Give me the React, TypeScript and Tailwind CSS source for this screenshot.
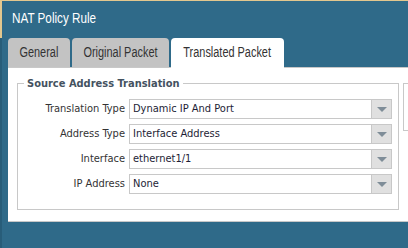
import React from "react";

const narrow = { fontFamily: "'Liberation Sans', Arial, sans-serif" };
const tahoma = { fontFamily: "'DejaVu Sans Condensed', 'DejaVu Sans', sans-serif" };

function Select({ value }: { value: string }) {
  return (
    <div className="flex h-[20px] items-stretch border border-[#c8c8c8] bg-white">
      <div className="flex flex-1 items-center pl-[3px] text-[11px] text-[#1d1d35]" style={tahoma}>
        {value}
      </div>
      <div className="flex w-[20px] items-center justify-center border-l border-[#c8c8c8] bg-[#e0e0e0]">
        <svg width="10" height="5" viewBox="0 0 10 5">
          <path d="M0 0 L10 0 L5 5 Z" fill="#7f8d98" />
        </svg>
      </div>
    </div>
  );
}

const rows = [
  ["Translation Type", "Dynamic IP And Port"],
  ["Address Type", "Interface Address"],
  ["Interface", "ethernet1/1"],
  ["IP Address", "None"],
];

function Tab({ label, w, active }: { label: string; w: string; active?: boolean }) {
  return (
    <div
      className={
        active
          ? `relative z-10 flex h-[30px] ${w} items-center justify-center rounded-t-[4px] bg-white pb-px`
          : `flex h-[29px] ${w} items-center justify-center rounded-t-[4px] bg-[#c3c3c3]`
      }
    >
      <span className="inline-block scale-x-[0.78] whitespace-nowrap text-[14px] text-[#333]" style={narrow}>
        {label}
      </span>
    </div>
  );
}

export default function App() {
  return (
    <div className="flex h-[248px] w-[408px] overflow-hidden bg-[#2f6a89]">
      <div className="flex w-[2px] shrink-0 flex-col">
        <div className="h-[38px] bg-[#e3c78e]" />
        <div className="flex-1 bg-[#285d79]" />
      </div>
      <div className="flex min-w-0 flex-1 flex-col">
        <div className="flex h-[38px] items-center border-t border-[#e3c78e] pb-[3px] pl-[10px]">
          <span className="inline-block origin-left scale-x-[0.78] whitespace-nowrap text-[15px] text-white" style={narrow}>
            NAT Policy Rule
          </span>
        </div>
        <div className="flex h-[29px] items-start gap-[2px] pl-[6px]">
          <Tab label="General" w="w-[62px]" />
          <Tab label="Original Packet" w="w-[97px]" />
          <Tab label="Translated Packet" w="w-[113px]" active />
        </div>
        <div className="ml-[6px] flex h-[155px] items-start gap-[4px] border-y border-[#c8c8c8] bg-white pl-[9px] pt-[9px]">
          <fieldset className="w-[382px] shrink-0 border border-[#c8c8c8] pb-[15px]">
            <legend className="ml-[6px] px-[3px] text-[11px] font-bold leading-[13px] text-[#44525f]" style={tahoma}>
              Source Address Translation
            </legend>
            <div className="flex flex-col gap-[5px] pr-[6px] pt-[9px]">
              {rows.map(([label, value]) => (
                <div key={label} className="grid grid-cols-[107px_263px] items-center gap-[4px]">
                  <div className="text-right text-[11px] text-[#333]" style={tahoma}>{label}</div>
                  <Select value={value} />
                </div>
              ))}
            </div>
          </fieldset>
          <div className="mt-[6px] h-[48px] w-[60px] shrink-0 border border-[#c8c8c8]" />
        </div>
      </div>
    </div>
  );
}
